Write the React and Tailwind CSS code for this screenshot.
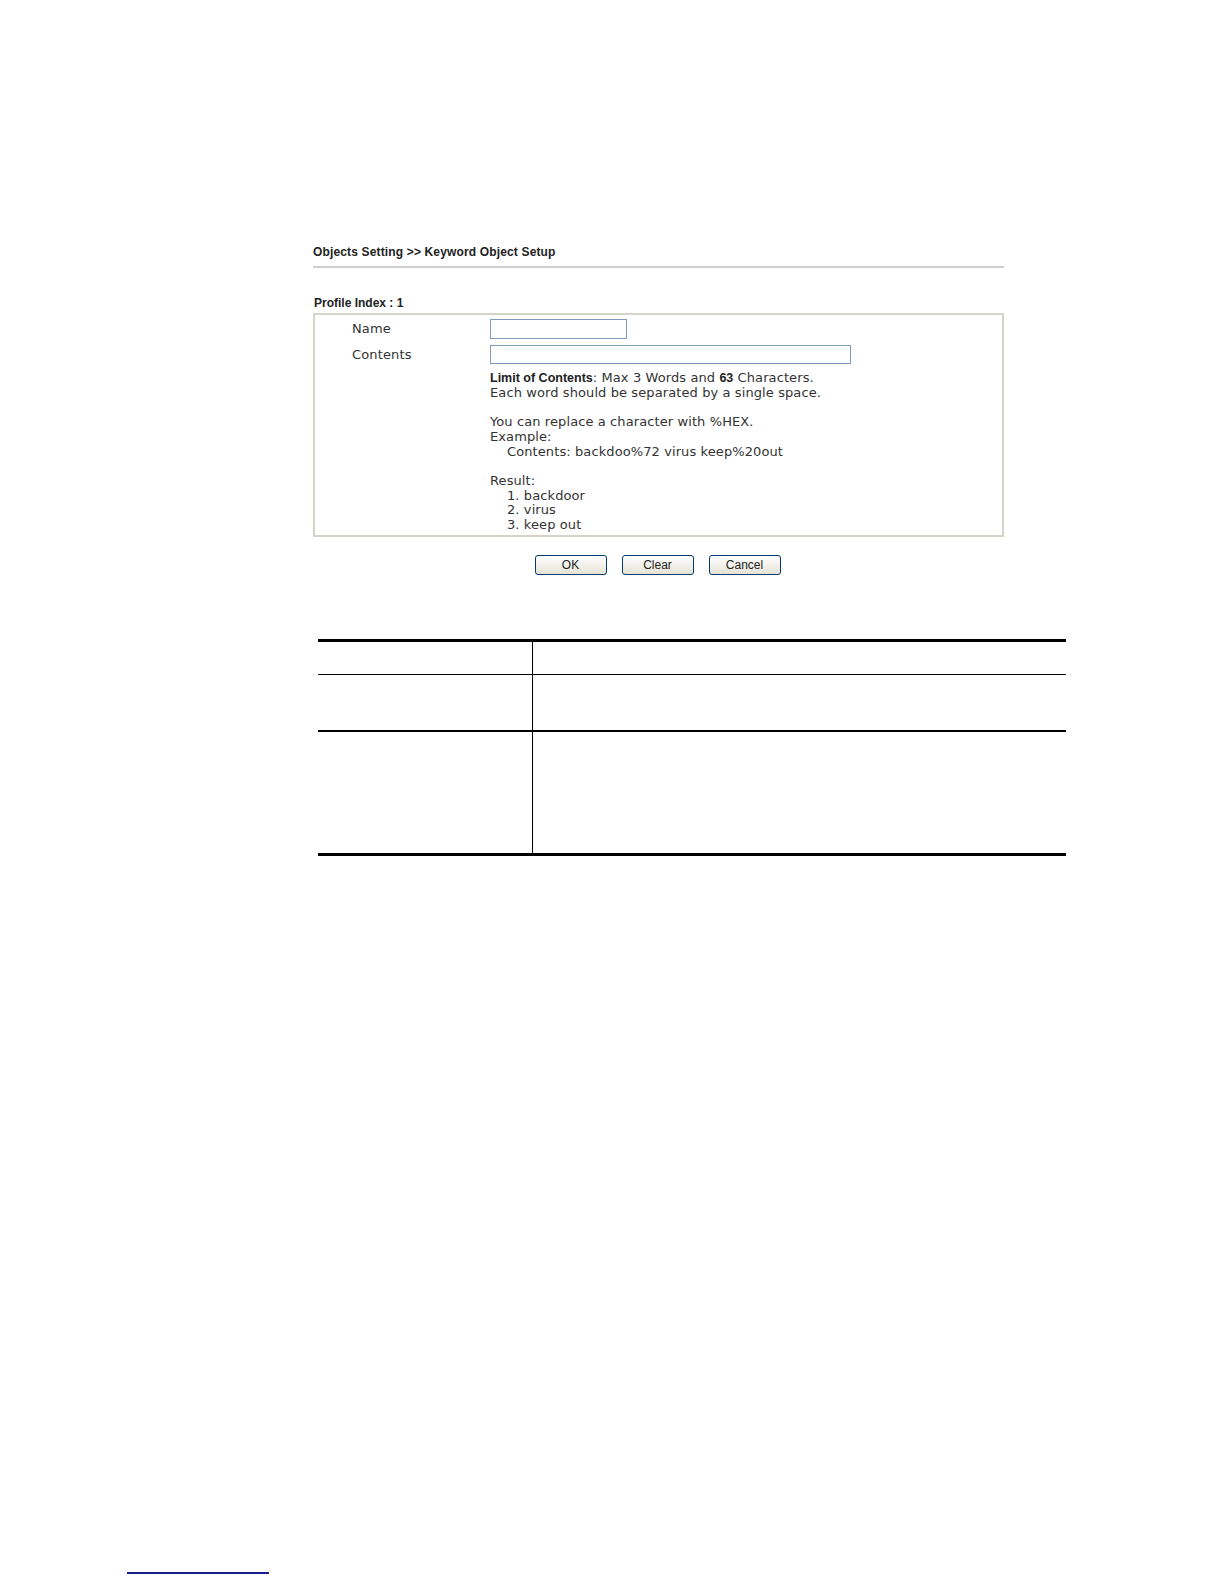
import React from "react";

const verdana = { fontFamily: '"DejaVu Sans", Verdana, sans-serif' };

function Btn({ children }) {
  return (
    <button
      type="button"
      className="w-[72px] h-[20px] rounded-[3px] border border-[#003c74] bg-gradient-to-b from-white to-[#e6e3d6] text-[12px] leading-none text-[#222] font-['Liberation_Sans',Arial,sans-serif]"
    >
      {children}
    </button>
  );
}

export default function App() {
  return (
    <div className="relative w-[1224px] h-[1584px] bg-white text-[#333] font-['Liberation_Sans',Arial,sans-serif]">
      <div className="pt-[245px] pl-[313px] w-[1010px]">
        <div className="text-[12px] leading-[14px] font-bold text-[#222] tracking-[0.15px]">
          Objects Setting &gt;&gt; Keyword Object Setup
        </div>
        <div className="mt-[7px] h-[2px] w-[691px] bg-[#cfcfcf]" />
        <div className="mt-[28px] pl-[1px] text-[12px] leading-[14px] font-bold text-[#222]">
          Profile Index : 1
        </div>
        <div className="mt-[3px] w-[691px] h-[224px] border-2 border-[#d6d3c9] pt-[4px]" style={verdana}>
          <div className="flex items-center h-[19px]">
            <div className="w-[175px] pl-[37px] text-[13px] tracking-[0.15px]">Name</div>
            <div className="w-[137px] h-[20px] border border-[#7f9db9] bg-white" />
          </div>
          <div className="flex items-center h-[19px] mt-[7px]">
            <div className="w-[175px] pl-[37px] text-[13px] tracking-[0.15px]">Contents</div>
            <div className="w-[361px] h-[19px] border border-[#7f9db9] bg-white" />
          </div>
          <div className="pl-[175px] mt-[7px] text-[13px] leading-[14.7px] text-[#333] tracking-[0.1px]">
            <div>
              <span className="font-bold font-['Liberation_Sans',Arial,sans-serif] text-[12.5px] tracking-normal text-[#222]">Limit of Contents</span>: Max 3 Words and <span className="font-bold font-['Liberation_Sans',Arial,sans-serif] text-[12.5px] tracking-normal text-[#222]">63</span> Characters.
            </div>
            <div>Each word should be separated by a single space.</div>
            <div className="h-[14.7px]" />
            <div>You can replace a character with %HEX.</div>
            <div>Example:</div>
            <div className="pl-[17px]">Contents: backdoo%72 virus keep%20out</div>
            <div className="h-[14.7px]" />
            <div>Result:</div>
            <div className="pl-[17px]">1. backdoor</div>
            <div className="pl-[17px]">2. virus</div>
            <div className="pl-[17px]">3. keep out</div>
          </div>
        </div>
        <div className="mt-[18px] w-[684px] flex justify-center gap-[15px] pl-[5px]">
          <Btn>OK</Btn>
          <Btn>Clear</Btn>
          <Btn>Cancel</Btn>
        </div>
      </div>

      <div className="mt-[64px] ml-[318px] w-[748px]">
        <div className="border-t-[3px] border-black" />
        <div className="flex h-[33px] border-b border-black">
          <div className="w-[215px] border-r border-black" />
          <div className="flex-1" />
        </div>
        <div className="flex h-[57px] border-b-2 border-black">
          <div className="w-[215px] border-r border-black" />
          <div className="flex-1" />
        </div>
        <div className="flex h-[124px] border-b-[3px] border-black">
          <div className="w-[215px] border-r border-black" />
          <div className="flex-1" />
        </div>
      </div>

      <div className="absolute left-[127px] top-[1572px] w-[142px] h-[2px] bg-[#1c1c8c]" />
    </div>
  );
}
